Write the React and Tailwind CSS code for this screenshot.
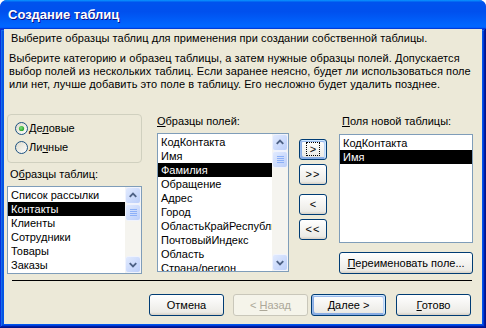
const F = { fontFamily: '"Liberation Sans", Arial, sans-serif' };

const tables = ["Список рассылки", "Контакты", "Клиенты", "Сотрудники", "Товары", "Заказы"];
const fields = [
  "КодКонтакта",
  "Имя",
  "Фамилия",
  "Обращение",
  "Адрес",
  "Город",
  "ОбластьКрайРеспублика",
  "ПочтовыйИндекс",
  "Область",
  "Страна/регион",
];
const chosen = ["КодКонтакта", "Имя"];

const Radio = ({ checked, children }) => (
  <div className="flex items-center h-[19px]">
    <svg width="13" height="13" viewBox="0 0 13 13">
      <defs>
        <linearGradient id="rg" x1="0" y1="0" x2="1" y2="1">
          <stop offset="0" stopColor="#dcd9c9" />
          <stop offset="1" stopColor="#ffffff" />
        </linearGradient>
        <radialGradient id="dot" cx="0.4" cy="0.4" r="0.7">
          <stop offset="0" stopColor="#7be07b" />
          <stop offset="1" stopColor="#1a9a1a" />
        </radialGradient>
      </defs>
      <circle cx="6.5" cy="6.5" r="6" fill="url(#rg)" stroke="#1c5180" />
      {checked && <circle cx="6.5" cy="6.5" r="2.6" fill="url(#dot)" />}
    </svg>
    <span className="ml-[1px] text-[11px] leading-[13px]">{children}</span>
  </div>
);

const Arrow = ({ down }) => (
  <svg width="15" height="15" viewBox="0 0 15 15">
    <path
      d={down ? "M4 6 L7.5 9.5 L11 6" : "M4 9 L7.5 5.5 L11 9"}
      fill="none"
      stroke="#4d6185"
      strokeWidth="2"
    />
  </svg>
);

const ScrollBtn = ({ children }) => (
  <div className="h-[17px] w-[16px] shrink-0 rounded-[3px] border border-[#f0f3fd] bg-[linear-gradient(135deg,#e1eafe,#bccffa)] flex items-center justify-center">
    {children}
  </div>
);

const ScrollBar = () => (
  <div className="w-[16px] h-full flex flex-col bg-[#f5f4ef]">
    <ScrollBtn>
      <Arrow />
    </ScrollBtn>
    <ScrollBtn>
      <div className="flex flex-col gap-[1px]">
        <div className="w-[7px] h-[1px] bg-[#8cb0f8]" />
        <div className="w-[7px] h-[1px] bg-[#8cb0f8]" />
        <div className="w-[7px] h-[1px] bg-[#8cb0f8]" />
        <div className="w-[7px] h-[1px] bg-[#8cb0f8]" />
      </div>
    </ScrollBtn>
    <div className="flex-1" />
    <ScrollBtn>
      <Arrow down />
    </ScrollBtn>
  </div>
);

const ListBox = ({ items, selected, scroll, className }) => (
  <div className={"flex border border-[#7f9db9] bg-white " + className}>
    <div className="flex-1 min-w-0 overflow-hidden pt-[1px]">
      {items.map((t, i) => (
        <div
          key={t}
          className={
            "h-[14px] leading-[14px] text-[11px] pl-[3px] whitespace-nowrap " +
            (i === selected ? "bg-black text-white" : "text-black")
          }
        >
          {t}
        </div>
      ))}
    </div>
    {scroll && <ScrollBar />}
  </div>
);

const Btn = ({ children, className = "", disabled, primary }) => (
  <div
    className={
      "flex items-center justify-center rounded-[3px] border text-[11px] " +
      (disabled
        ? "border-[#c9c7ba] bg-[#f5f4ea] text-[#aca899] "
        : "border-[#003c74] bg-[linear-gradient(to_bottom,#ffffff,#ecebe6_86%,#d6d0c5)] text-black ") +
      (primary
        ? "shadow-[inset_-1px_1px_#cee7ff,inset_1px_2px_#98b8ea,inset_-2px_2px_#bcd4f6,inset_1px_-1px_#89ade4,inset_2px_-2px_#89ade4] "
        : "") +
      className
    }
  >
    <span className="whitespace-pre">{children}</span>
  </div>
);

const U = ({ children }) => <span className="underline underline-offset-[1px]">{children}</span>;

export default function App() {
  return (
    <div style={F} className="w-[486px] h-[328px] flex flex-col rounded-t-[7px] overflow-hidden bg-[#0831d9]">
      <div className="h-[29px] shrink-0 flex items-center pl-[8px] bg-[linear-gradient(180deg,#0997ff,#0053ee_8%,#0050ee_40%,#0066ff_88%,#0066ff_93%,#005bff_95%,#003dd7_96%,#003dd7)]">
        <span className="text-white font-bold text-[13px] [text-shadow:1px_1px_#0f1089]">Создание таблиц</span>
      </div>
      <div className="flex-1 px-[4px] pb-[4px] bg-[#0055ea] shadow-[inset_-1px_-1px_#00138c,inset_1px_1px_#0831d9,inset_-2px_-2px_#001ea0,inset_2px_2px_#166aee,inset_-3px_-3px_#003bda,inset_3px_3px_#0855dd]">
        <div className="h-full bg-[#ece9d8] text-black flex flex-col">
          <div className="mt-[3px] pl-[7px] text-[11px] leading-[13px] tracking-[0.05px] whitespace-nowrap">
            Выберите образцы таблиц для применения при создании собственной таблицы.
          </div>
          <div className="mt-[7px] pl-[5px] text-[11px] leading-[13px] tracking-[0.08px] whitespace-nowrap">
            Выберите категорию и образец таблицы, а затем нужные образцы полей. Допускается
            <br />
            выбор полей из нескольких таблиц. Если заранее неясно, будет ли использоваться поле
            <br />
            или нет, лучше добавить это поле в таблицу. Его несложно будет удалить позднее.
          </div>

          <div className="mt-[23px] h-[160px] pl-[3px] flex">
            <div className="w-[135px] flex flex-col">
              <div className="h-[49px] rounded-[4px] border border-[#d0d0bf] pt-[4px] pl-[7px]">
                <Radio checked>
                  Де<U>л</U>овые
                </Radio>
                <Radio>
                  Ли<U>ч</U>ные
                </Radio>
              </div>
              <div className="mt-[5px] pl-[3px] text-[11px] leading-[13px]">
                О<U>б</U>разцы таблиц:
              </div>
              <ListBox items={tables} selected={1} scroll className="mt-[5px] h-[88px]" />
            </div>

            <div className="ml-[15px] w-[132px] flex flex-col">
              <div className="mt-[1px] text-[11px] leading-[13px]">
                <U>О</U>бразцы полей:
              </div>
              <ListBox items={fields} selected={2} scroll className="mt-[5px] h-[139px]" />
            </div>

            <div className="ml-[10px] w-[28px] flex flex-col">
              <Btn primary className="mt-[25px] h-[21px]">
                <span className="inline-block border border-dotted border-black px-[3px] leading-[12px]">&gt;</span>
              </Btn>
              <Btn className="mt-[4px] h-[21px] tracking-[1px]">&gt;&gt;</Btn>
              <Btn className="mt-[9px] h-[21px]">&lt;</Btn>
              <Btn className="mt-[4px] h-[21px] tracking-[1px]">&lt;&lt;</Btn>
            </div>

            <div className="ml-[12px] w-[134px] flex flex-col">
              <div className="mt-[1px] pl-[3px] text-[11px] leading-[13px]">
                <U>П</U>оля новой таблицы:
              </div>
              <ListBox items={chosen} selected={1} className="mt-[6px] h-[109px]" />
              <Btn className="mt-[9px] h-[22px]">
                <U>П</U>ереименовать поле...
              </Btn>
            </div>
          </div>

          <div className="mt-[6px] ml-[8px] w-[460px] h-[1px] bg-black" />

          <div className="mt-[13px] flex justify-end pr-[11px]">
            <Btn className="w-[75px] h-[22px]">Отмена</Btn>
            <Btn disabled className="ml-[9px] w-[75px] h-[22px]">
              {"< "}
              <U>Н</U>азад
            </Btn>
            <Btn primary className="ml-[3px] w-[75px] h-[22px]">
              <U>Д</U>алее{" >"}
            </Btn>
            <Btn className="ml-[10px] w-[75px] h-[22px]">
              <U>Г</U>отово
            </Btn>
          </div>
        </div>
      </div>
    </div>
  );
}
